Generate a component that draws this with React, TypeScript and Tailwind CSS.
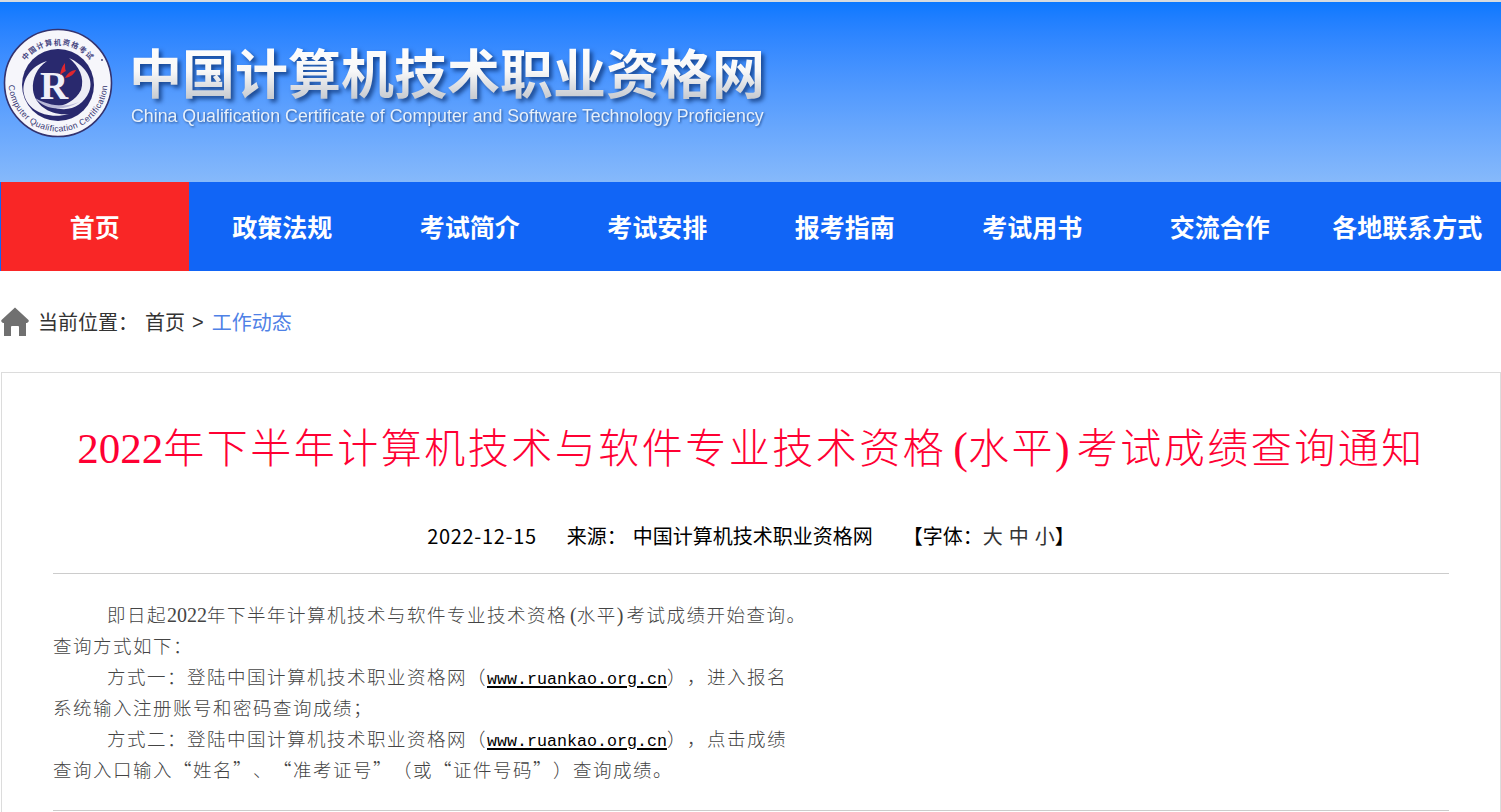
import React from 'react';

const navItems = ['首页', '政策法规', '考试简介', '考试安排', '报考指南', '考试用书', '交流合作', '各地联系方式'];

function Logo() {
  return (
    <svg width="110" height="112" viewBox="0 0 110 112" className="shrink-0">
      <defs>
        <path id="ringTop" d="M 14.5 57 A 40.5 40.5 0 0 1 95.5 57" />
        <path id="ringBottom" d="M 6 47 A 49.5 49.5 0 1 0 104 47" />
      </defs>
      <circle cx="55" cy="55" r="53.5" fill="#f6f6fb" stroke="#34336f" strokeWidth="1.6" />
      <circle cx="55" cy="57" r="36" fill="#29296e" />
      <path d="M44 33 C28 38 18 52 21 66 C24 82 44 92 66 86 C48 88 32 78 30 62 C29 50 34 40 44 33 Z" fill="#f2f2f8" />
      <path d="M66 30 C80 36 92 50 86 64 C80 78 64 86 48 78 C58 80 72 74 78 62 C82 50 76 38 66 30 Z" fill="#eeeef6" />
      <path d="M32 70 C42 82 60 84 76 74 C62 80 46 78 32 70 Z" fill="#b9b9d8" />
      <text x="37" y="71" fontFamily="'Liberation Serif', serif" fontSize="39" fontWeight="700" fill="#efeff7">R</text>
      <path d="M57 47 C58 42 59 38 62 35 C62 39 62 42 63 43 C61 44 59 45 57 47 Z" fill="#e0262e" />
      <path d="M62 50 C64 46 68 42 73 42 C71 46 68 49 62 50 Z" fill="#e0262e" />
      <circle cx="99" cy="32" r="0.9" fill="#34336f" />
      <text fontFamily="'Noto Sans CJK SC', sans-serif" fontSize="7.4" fontWeight="700" fill="#45447f" textAnchor="middle" letterSpacing="1">
        <textPath href="#ringTop" startOffset="50%">中国计算机资格考试</textPath>
      </text>
      <text fontFamily="'Liberation Sans', sans-serif" fontSize="8.5" fill="#34336f" textAnchor="middle" letterSpacing="0.4">
        <textPath href="#ringBottom" startOffset="50%">Computer Qualification Certification</textPath>
      </text>
    </svg>
  );
}

function HomeIcon() {
  return (
    <svg width="28" height="29" viewBox="0 0 28 29" className="shrink-0">
      <path
        d="M14 0.5 L27.5 13 Q28.5 15 26 16 L25 16 V29 H18 V20 Q18 19 17 19 H11 Q10 19 10 20 V29 H3 V16 L2 16 Q-0.5 15 0.5 13 Z"
        fill="#707070"
      />
    </svg>
  );
}

function Num({ children }: { children: React.ReactNode }) {
  return <span className="font-['Liberation_Serif',serif] text-[20px] leading-none tracking-normal">{children}</span>;
}

function Url() {
  return (
    <span className="font-['Liberation_Mono',monospace] text-[16.67px] leading-none tracking-normal text-black underline decoration-2 underline-offset-2">
      www.ruankao.org.cn
    </span>
  );
}

export default function App() {
  return (
    <div className="h-[812px] overflow-hidden bg-white font-['Noto_Sans_CJK_SC',sans-serif]">
      {/* Banner */}
      <div className="h-[182px] border-t-2 border-[#d6dbe0] bg-gradient-to-b from-[#0a78ff] to-[#86b9fb] pl-[3px] pt-[26px]">
        <div className="flex items-start gap-[16px]">
          <Logo />
          <div className="flex flex-col pt-[11px]">
            <div className="bg-gradient-to-b from-white via-[#f8f8f8] to-[#bfc3ca] bg-clip-text text-[53px] leading-[64px] font-bold text-transparent drop-shadow-[3px_3px_2px_rgba(0,32,90,0.65)]">
              中国计算机技术职业资格网
            </div>
            <div className="mt-[2px] ml-[2px] font-['Liberation_Sans',sans-serif] text-[17.77px] leading-[22px] whitespace-nowrap text-[#e6f0fb] drop-shadow-[1px_1px_1px_rgba(0,32,90,0.6)]">
              China Qualification Certificate of Computer and Software Technology Proficiency
            </div>
          </div>
        </div>
      </div>

      {/* Nav */}
      <div className="flex h-[89px] bg-[#1165f6] pl-px">
        {navItems.map((item, i) => (
          <div
            key={item}
            className={`flex w-[187.5px] items-center justify-center text-[25px] font-bold whitespace-nowrap text-white ${i === 0 ? 'bg-[#f92626]' : ''}`}
          >
            {item}
          </div>
        ))}
      </div>

      {/* Breadcrumb */}
      <div className="flex h-[101px] items-center pl-px text-[20px] text-[#333]">
        <HomeIcon />
        <span className="ml-[9px]">当前位置：</span>
        <span className="ml-[7px]">首页</span>
        <span className="ml-[7px] font-['Liberation_Sans',sans-serif]">&gt;</span>
        <span className="ml-[8px] text-[#4f81e6]">工作动态</span>
      </div>

      {/* Article */}
      <div className="ml-px h-[500px] border border-[#dcdcdc] px-[51px]">
        <h1 className="mt-[43px] text-center text-[41px] leading-[58px] font-light tracking-[2.5px] whitespace-nowrap text-[#ff0033]">
          <span className="font-['Liberation_Serif',serif] text-[43px] leading-none tracking-normal">2022</span>
          年下半年计算机技术与软件专业技术资格
          <span className="pl-[7px] font-['Liberation_Serif',serif] text-[44px] leading-none tracking-normal">(</span>
          水平
          <span className="pr-[7px] font-['Liberation_Serif',serif] text-[44px] leading-none tracking-normal">)</span>
          考试成绩查询通知
        </h1>
        <div className="mt-[47px] flex h-[30px] items-center justify-center text-[20px] whitespace-nowrap text-black">
          <span className="tracking-[0.7px]">2022-12-15</span>
          <span className="ml-[30px]">来源：</span>
          <span className="ml-[6px]">中国计算机技术职业资格网</span>
          <span className="ml-[30px]">【字体：</span>
          <span className="tracking-[6px] text-[#333]">大中</span>
          <span className="text-[#333]">小</span>
          <span>】</span>
        </div>
        <div className="mt-[22px] h-px bg-[#cccccc]" />
        <div className="mt-[25px] text-[18.5px] leading-[31px] font-light tracking-[1.5px] whitespace-nowrap text-[#444] [text-spacing-trim:space-all]">
          <p className="pl-[54px]">
            即日起<Num>2022</Num>年下半年计算机技术与软件专业技术资格<span className="pl-[3px] font-['Liberation_Serif',serif] text-[20px] leading-none tracking-normal">(</span>水平<span className="pr-[3px] font-['Liberation_Serif',serif] text-[20px] leading-none tracking-normal">)</span>考试成绩开始查询。
          </p>
          <p>查询方式如下：</p>
          <p className="pl-[54px]">
            方式一：登陆中国计算机技术职业资格网（<Url />），进入报名
          </p>
          <p>系统输入注册账号和密码查询成绩；</p>
          <p className="pl-[54px]">
            方式二：登陆中国计算机技术职业资格网（<Url />），点击成绩
          </p>
          <p>查询入口输入“姓名”、“准考证号”（或“证件号码”）查询成绩。</p>
        </div>
        <div className="mt-[25px] h-px bg-[#cccccc]" />
      </div>
    </div>
  );
}
